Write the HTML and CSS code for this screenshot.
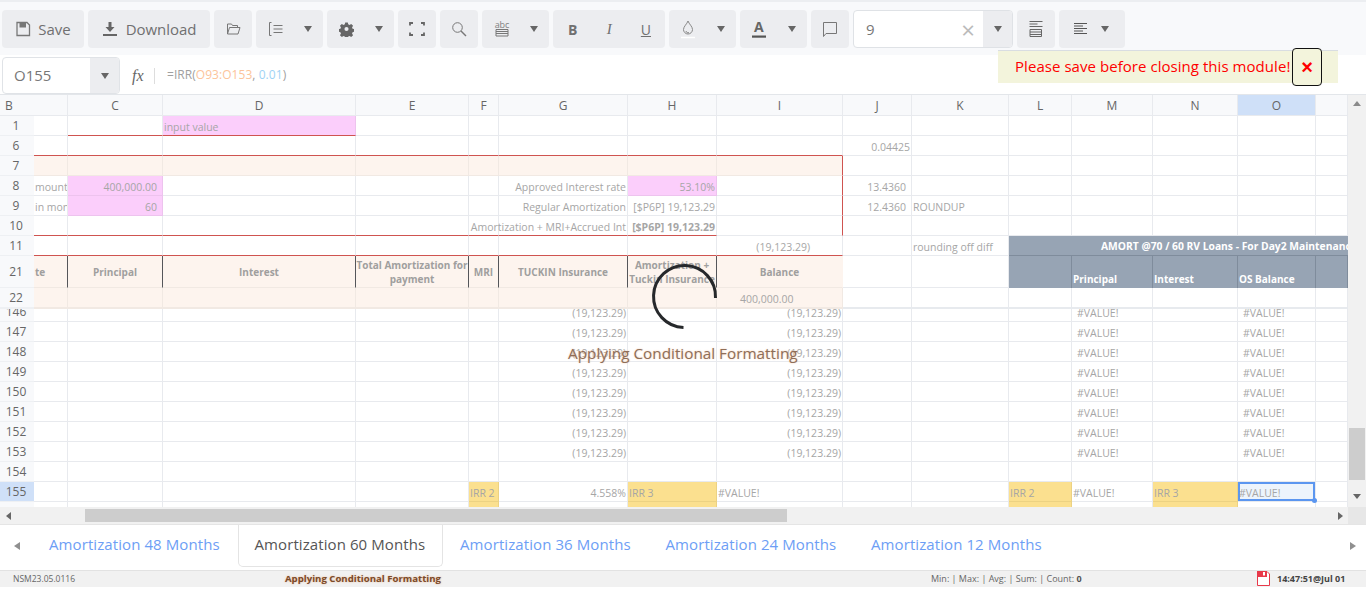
FILE: index.html
```html
<!doctype html>
<html>
  <head>
    <title>Amortization</title>
    <link rel="stylesheet" href="styles.css">
  </head>
  <body>
    <div id="toolbar">
      <div class="btn wide-save"><svg width="16" height="16" viewBox="0 0 16 16"><path d="M2 1.5h10l2.5 2.5v10.5h-12.5z" fill="none" stroke="#777" stroke-width="1.3"/><rect x="4.5" y="2" width="6.5" height="4.5" fill="#777"/></svg><span>Save</span></div>
      <div class="btn wide-dl"><svg width="16" height="16" viewBox="0 0 16 16"><path d="M6.5 1h3v5h3l-4.500 5-4.500-5h3zM1 13h14v2h-14z" fill="#666"/></svg><span>Download</span></div>
      <div class="btn sq"><svg width="15" height="14" viewBox="0 0 15 14"><path d="M1.5 12v-10h4l1 1.500h5v2M1.500 12l2-6.500h10.500l-2 6.500z" fill="none" stroke="#777" stroke-width="1"/></svg></div>
      <div class="btn split"><svg width="16" height="16" viewBox="0 0 16 16"><path d="M3.5 1.5h-2v13h2M5.500 4.500h9M5.500 8h9M5.500 11.500h9" fill="none" stroke="#777" stroke-width="1"/></svg><i class="caret"></i></div>
      <div class="btn split"><svg width="15" height="15" viewBox="0 0 16 16"><path d="M6.6 1h2.800l.4 2 1.400.6 1.800-1.100 2 2-1.100 1.800.6 1.400 2 .4v2.800l-2 .4-.6 1.400 1.100 1.800-2 2-1.800-1.100-1.400.6-.4 2h-2.800l-.4-2-1.400-.6-1.800 1.100-2-2 1.100-1.800-.6-1.400-2-.4v-2.800l2-.4.6-1.400-1.100-1.800 2-2 1.800 1.100 1.400-.6zM8 5.800a2.200 2.200 0 1 0 0 4.400 2.200 2.200 0 0 0 0-4.400z" fill="#666" transform="translate(0 -.5)"/></svg><i class="caret"></i></div>
      <div class="btn sq"><svg width="16" height="14" viewBox="0 0 16 14"><path d="M1 3.500v-2.500h3M12 1h3v2.500M15 10.500v2.500h-3M4 13h-3v-2.500" fill="none" stroke="#666" stroke-width="1.800"/></svg></div>
      <div class="btn sq"><svg width="16" height="16" viewBox="0 0 16 16"><circle cx="6.5" cy="6.5" r="4.800" fill="none" stroke="#777" stroke-width="1"/><path d="M10 10l5 5" stroke="#777" stroke-width="1.400"/></svg></div>
      <div class="btn split"><svg width="16" height="18" viewBox="0 0 16 18"><text x="8" y="7.500" text-anchor="middle" font-size="9" fill="#808080">abc</text><path d="M2 9.500h12v6.500h-12zM2 11.500h12M2 13.500h12" fill="none" stroke="#777" stroke-width="1"/></svg><i class="caret"></i></div>
      <div class="btn fmt"><b>B</b><em>I</em><u>U</u></div>
      <div class="btn split"><svg width="14" height="20" viewBox="0 0 14 20"><path d="M7 2c-1 3-4.500 5.500-4.500 8.500a4.500 4.500 0 0 0 9 0c0-3-3.500-5.500-4.500-8.500zM8 13.500a2 2 0 0 1-3-1.500" fill="none" stroke="#888" stroke-width="1"/><path d="M0 18.500h14" stroke="#fff" stroke-width="1.500"/></svg><i class="caret"></i></div>
      <div class="btn split"><svg width="14" height="20" viewBox="0 0 14 20"><path d="M0 16.500h14v2.200h-14z" fill="#555"/></svg><span class="a-glyph">A</span><i class="caret"></i></div>
      <div class="btn sq"><svg width="16" height="17" viewBox="0 0 16 17"><path d="M1.500 1.500h13v11h-10.500l-2.500 3z" fill="none" stroke="#777" stroke-width="1"/></svg></div>
      <div class="font-size"><span class="fs-val">9</span><span class="fs-x">&#215;</span><span class="fs-drop"><i class="caret"></i></span></div>
      <div class="btn sq"><svg width="16" height="18" viewBox="0 0 16 18"><path d="M1.500 1.500h13M1.500 4h8M1.500 6.500h13M2 9.500h11.500v7h-11.500zM2 12h11.500M2 14.500h11.500" fill="none" stroke="#666" stroke-width="1"/></svg></div>
      <div class="btn split align"><svg width="15" height="14" viewBox="0 0 15 14"><path d="M1 1.500h13M1 4h9M1 6.500h13M1 9h9M1 11.500h13" fill="none" stroke="#555" stroke-width="1"/></svg><i class="caret"></i></div>
    </div>

    <div id="formulaBar">
      <div class="namebox"><span class="nb-val">O155</span><span class="nb-drop"><i class="caret"></i></span></div>
      <span class="fx">fx</span>
      <span class="fx-sep"></span>
      <span class="formula">=IRR(<span class="f-range">O93:O153</span>, <span class="f-num">0.01</span>)</span>
    </div>

    <div id="sheetArea">
      <div id="grid">
        <table class="sheet">
          <colgroup>
            <col class="c-rh"><col class="c-b"><col class="c-c"><col class="c-d"><col class="c-e"><col class="c-f"><col class="c-g"><col class="c-h"><col class="c-i"><col class="c-j"><col class="c-k"><col class="c-l"><col class="c-m"><col class="c-n"><col class="c-o"><col class="c-p">
          </colgroup>
          <tr class="r-head">
            <th colspan="2" class="th-b">B</th><th>C</th><th>D</th><th>E</th><th>F</th><th>G</th><th>H</th><th>I</th><th>J</th><th>K</th><th>L</th><th>M</th><th>N</th><th class="sel-h">O</th><th></th>
          </tr>
          <tr><td class="rh">1</td><td></td><td class="red-b"></td><td class="pink red-b">input value</td><td></td><td></td><td></td><td></td><td></td><td></td><td></td><td></td><td></td><td></td><td></td><td></td></tr>
          <tr><td class="rh">6</td><td class="red-b"></td><td class="red-b"></td><td class="red-b"></td><td class="red-b"></td><td class="red-b"></td><td class="red-b"></td><td class="red-b"></td><td class="red-b"></td><td class="rt">0.04425</td><td></td><td></td><td></td><td></td><td></td><td></td></tr>
          <tr><td class="rh">7</td><td class="peach"></td><td class="peach"></td><td class="peach"></td><td class="peach"></td><td class="peach"></td><td class="peach"></td><td class="peach"></td><td class="peach red-r"></td><td></td><td></td><td></td><td></td><td></td><td></td><td></td></tr>
          <tr><td class="rh">8</td><td>mount</td><td class="pink rt pad">400,000.00</td><td></td><td></td><td></td><td class="rt">Approved Interest rate</td><td class="pink rt">53.10%</td><td class="red-r"></td><td class="rt pad">13.4360</td><td></td><td></td><td></td><td></td><td></td><td></td></tr>
          <tr><td class="rh">9</td><td>in mon</td><td class="pink rt pad">60</td><td></td><td></td><td></td><td class="rt">Regular Amortization</td><td class="rt">[$P6P] 19,123.29</td><td class="red-r"></td><td class="rt pad">12.4360</td><td>ROUNDUP</td><td></td><td></td><td></td><td></td><td></td></tr>
          <tr><td class="rh">10</td><td class="red-b"></td><td class="red-b"></td><td class="red-b"></td><td class="red-b"></td><td class="red-b"></td><td class="open rt red-b"><span class="over-left">Amortization + MRI+Accrued Int</span></td><td class="rt strong red-b">[$P6P] 19,123.29</td><td class="red-r"></td><td></td><td></td><td></td><td></td><td></td><td></td><td></td></tr>
          <tr><td class="rh">11</td><td class="red-b"></td><td class="red-b"></td><td class="red-b"></td><td class="red-b"></td><td class="red-b"></td><td class="red-b"></td><td class="red-b"></td><td class="rt red-b neg">(19,123.29)</td><td></td><td>rounding off diff</td><td colspan="5" class="amort-title">AMORT @70 / 60 RV Loans - For Day2 Maintenance</td></tr>
          <tr class="r-21"><td class="rh">21</td><td class="hd hd-left">te</td><td class="hd">Principal</td><td class="hd">Interest</td><td class="hd tight">Total Amortization for payment</td><td class="hd">MRI</td><td class="hd">TUCKIN Insurance</td><td class="hd tight">Amortization + Tuckin Insurance</td><td class="hd hd-last">Balance</td><td></td><td></td><td class="am"></td><td class="am">Principal</td><td class="am">Interest</td><td class="am">OS Balance</td><td class="am"></td></tr>
          <tr class="r-22"><td class="rh">22</td><td class="peach"></td><td class="peach"></td><td class="peach"></td><td class="peach"></td><td class="peach"></td><td class="peach"></td><td class="peach"></td><td class="peach bal">400,000.00</td><td></td><td></td><td></td><td></td><td></td><td></td><td></td></tr>
        </table>

        <div class="scrolled">
          <table class="sheet">
            <colgroup>
              <col class="c-rh"><col class="c-b"><col class="c-c"><col class="c-d"><col class="c-e"><col class="c-f"><col class="c-g"><col class="c-h"><col class="c-i"><col class="c-j"><col class="c-k"><col class="c-l"><col class="c-m"><col class="c-n"><col class="c-o"><col class="c-p">
            </colgroup>
            <tr><td class="rh">146</td><td></td><td></td><td></td><td></td><td></td><td class="rt">(19,123.29)</td><td></td><td class="rt">(19,123.29)</td><td></td><td></td><td></td><td class="val">#VALUE!</td><td></td><td class="val">#VALUE!</td><td></td></tr>
            <tr><td class="rh">147</td><td></td><td></td><td></td><td></td><td></td><td class="rt">(19,123.29)</td><td></td><td class="rt">(19,123.29)</td><td></td><td></td><td></td><td class="val">#VALUE!</td><td></td><td class="val">#VALUE!</td><td></td></tr>
            <tr><td class="rh">148</td><td></td><td></td><td></td><td></td><td></td><td class="rt">(19,123.29)</td><td></td><td class="rt">(19,123.29)</td><td></td><td></td><td></td><td class="val">#VALUE!</td><td></td><td class="val">#VALUE!</td><td></td></tr>
            <tr><td class="rh">149</td><td></td><td></td><td></td><td></td><td></td><td class="rt">(19,123.29)</td><td></td><td class="rt">(19,123.29)</td><td></td><td></td><td></td><td class="val">#VALUE!</td><td></td><td class="val">#VALUE!</td><td></td></tr>
            <tr><td class="rh">150</td><td></td><td></td><td></td><td></td><td></td><td class="rt">(19,123.29)</td><td></td><td class="rt">(19,123.29)</td><td></td><td></td><td></td><td class="val">#VALUE!</td><td></td><td class="val">#VALUE!</td><td></td></tr>
            <tr><td class="rh">151</td><td></td><td></td><td></td><td></td><td></td><td class="rt">(19,123.29)</td><td></td><td class="rt">(19,123.29)</td><td></td><td></td><td></td><td class="val">#VALUE!</td><td></td><td class="val">#VALUE!</td><td></td></tr>
            <tr><td class="rh">152</td><td></td><td></td><td></td><td></td><td></td><td class="rt">(19,123.29)</td><td></td><td class="rt">(19,123.29)</td><td></td><td></td><td></td><td class="val">#VALUE!</td><td></td><td class="val">#VALUE!</td><td></td></tr>
            <tr><td class="rh">153</td><td></td><td></td><td></td><td></td><td></td><td class="rt">(19,123.29)</td><td></td><td class="rt">(19,123.29)</td><td></td><td></td><td></td><td class="val">#VALUE!</td><td></td><td class="val">#VALUE!</td><td></td></tr>
            <tr><td class="rh">154</td><td></td><td></td><td></td><td></td><td></td><td></td><td></td><td></td><td></td><td></td><td></td><td></td><td></td><td></td><td></td></tr>
            <tr><td class="rh sel-h">155</td><td></td><td></td><td></td><td></td><td class="yellow">IRR 2</td><td class="rt">4.558%</td><td class="yellow">IRR 3</td><td>#VALUE!</td><td></td><td></td><td class="yellow">IRR 2</td><td>#VALUE!</td><td class="yellow">IRR 3</td><td class="sel-cell">#VALUE!<i class="handle"></i></td><td></td></tr>
            <tr><td class="rh"></td><td></td><td></td><td></td><td></td><td class="yellow"></td><td></td><td class="yellow"></td><td></td><td></td><td></td><td class="yellow"></td><td></td><td class="yellow"></td><td></td><td></td></tr>
          </table>
        </div>
      </div>

      <div class="vscroll">
        <i class="arr-up"></i>
        <div class="v-track"><div class="v-thumb"></div></div>
        <i class="arr-down"></i>
      </div>
    </div>

    <div class="hscroll">
      <i class="arr-left"></i>
      <div class="h-track"><div class="h-thumb"></div></div>
      <i class="arr-right"></i>
      <div class="h-corner"></div>
    </div>

    <div id="tabs">
      <i class="tab-prev"></i>
      <a class="tab">Amortization 48 Months</a>
      <a class="tab active">Amortization 60 Months</a>
      <a class="tab">Amortization 36 Months</a>
      <a class="tab">Amortization 24 Months</a>
      <a class="tab">Amortization 12 Months</a>
      <i class="tab-next"></i>
    </div>

    <div id="status">
      <span class="st-id">NSM23.05.0116</span>
      <span class="st-msg">Applying Conditional Formatting</span>
      <span class="st-calc">Min: | Max: | Avg: | Sum: | Count: <b>0</b></span>
      <svg class="st-save" width="13" height="15" viewBox="0 0 13 15"><path d="M.5.5h9.500l2.500 2.500v11.500h-12z" fill="#fff" stroke="#e8394a"/><path d="M0 0h10v6h-10z" fill="#e8394a"/><rect x="6" y="1" width="2" height="3.5" fill="#fff"/></svg>
      <span class="st-time">14:47:51@Jul 01</span>
    </div>

    <!-- overlays -->
    <div id="toast">
      <span>Please save before closing this module!</span>
      <button class="toast-close">&#215;</button>
    </div>
    <svg id="spinner" width="70" height="70" viewBox="0 0 70 70"><path d="M65.5 37a31 31 0 1 0-32 29.500" fill="none" stroke="#26282b" stroke-width="3"/></svg>
    <div id="loadingText">Applying Conditional Formatting</div>
  </body>
</html>
```

FILE: styles.css
```css
* {
  box-sizing: border-box;
}
html, body {
  height: 100%;
}
body {
  margin: 0;
  background-color: #fff;
  font-family: "Open Sans", "Liberation Sans", sans-serif;
  color: #666;
  overflow: hidden;
  position: relative;
}

/* toolbar */
#toolbar {
  height: 55px;
  padding: 8px 2px 7px 2px;
  border-top: 2px solid #eceef1;
  background-color: #f8f9fb;
  display: flex;
  gap: 4px;
}
.btn {
  height: 38px;
  background-color: #ecedf0;
  border-radius: 4px;
  display: flex;
  align-items: center;
  justify-content: center;
  color: #707070;
  font-size: 15px;
  letter-spacing: -0.05px;
  flex: none;
}
.wide-save {
  width: 82px;
  gap: 7px;
}
.wide-dl {
  width: 122px;
  gap: 8px;
}
.sq {
  width: 38px;
}
.split {
  width: 67px;
  justify-content: space-between;
  padding: 0 11px 0 12px;
  position: relative;
}
.align {
  width: 66px;
  padding: 0 16px 0 14px;
}
.caret {
  display: inline-block;
  width: 0;
  height: 0;
  border-left: 4px solid transparent;
  border-right: 4px solid transparent;
  border-top: 6px solid #666;
}
.fmt {
  width: 112px;
  justify-content: space-between;
  padding: 0 14px 0 15px;
  font-size: 14px;
}
.fmt em {
  font-family: "Liberation Serif", serif;
  font-size: 15px;
}
.a-glyph {
  position: absolute;
  left: 14px;
  top: 7px;
  font-size: 14px;
  font-weight: bold;
  color: #666;
}
.font-size {
  width: 160px;
  height: 38px;
  border: 1px solid #dfe2e6;
  border-radius: 4px;
  background-color: #fff;
  display: flex;
  align-items: center;
  overflow: hidden;
  flex: none;
}
.fs-val {
  flex: 1;
  padding-left: 12px;
  font-size: 15px;
  color: #777;
}
.fs-x {
  width: 30px;
  text-align: center;
  font-size: 24px;
  color: #bbb;
}
.fs-drop {
  width: 29px;
  height: 100%;
  background-color: #ecedf0;
  display: flex;
  align-items: center;
  justify-content: center;
}

/* formula bar */
#formulaBar {
  height: 40px;
  padding: 2px 0 0 2px;
  border-bottom: 1px solid #e3e6ea;
  display: flex;
  align-items: center;
  background-color: #fff;
}
.namebox {
  width: 118px;
  height: 37px;
  border: 1px solid #e0e3e7;
  border-radius: 4px;
  display: flex;
  overflow: hidden;
}
.nb-val {
  flex: 1;
  padding: 7px 0 0 11px;
  font-size: 15px;
  color: #777;
}
.nb-drop {
  width: 29px;
  background-color: #ecedf0;
  display: flex;
  align-items: center;
  justify-content: center;
}
.fx {
  margin-left: 12px;
  width: 22px;
  font-family: "Liberation Serif", serif;
  font-style: italic;
  font-size: 16px;
  color: #666;
}
.fx-sep {
  width: 1px;
  height: 16px;
  background-color: #ddd;
}
.formula {
  margin: 0 0 2px 12px;
  font-size: 12px;
  letter-spacing: 0.05px;
  color: #a0a0a0;
}
.f-range {
  color: #fcc49a;
}
.f-num {
  color: #9fd3f5;
}

/* sheet */
#sheetArea {
  display: flex;
  height: 412px;
}
#grid {
  width: 1348px;
  flex: none;
  overflow: hidden;
}
.sheet {
  table-layout: fixed;
  border-collapse: separate;
  border-spacing: 0;
  width: 1348px;
  font-size: 10.5px;
  color: #a6a6a6;
}
.c-rh { width: 34px; }
.c-b { width: 34px; }
.c-c { width: 95px; }
.c-d { width: 193px; }
.c-e { width: 113px; }
.c-f { width: 30px; }
.c-g { width: 129px; }
.c-h { width: 89px; }
.c-i { width: 126px; }
.c-j { width: 69px; }
.c-k { width: 97px; }
.c-l { width: 63px; }
.c-m { width: 81px; }
.c-n { width: 85px; }
.c-o { width: 78px; }
.c-p { width: 32px; }

.sheet th, .sheet td {
  padding: 3px 1px 0 1px;
  height: 20px;
  border-right: 1px solid #e8eaee;
  border-bottom: 1px solid #e8eaee;
  white-space: nowrap;
  overflow: hidden;
  font-weight: normal;
  vertical-align: middle;
  line-height: 16px;
}
.sheet th {
  background-color: #f8f9fb;
  font-size: 12px;
  color: #666;
  text-align: center;
  padding: 0 1px;
  line-height: 19px;
}
.r-head th {
  height: 21px;
}
.sheet th.th-b {
  text-align: left;
  padding-left: 5px;
}
.sheet td.rh {
  background-color: #f8f9fb;
  border-right: 0;
  border-bottom-color: #eef0f3;
  font-size: 12px;
  color: #666;
  text-align: center;
  padding: 0 3px 0 1px;
  line-height: 19px;
}
.sheet .sel-h {
  background-color: #cfe0f8;
}
.sheet td.rh.sel-h {
  background-color: #cfe0f8;
}
.sheet td.rt {
  text-align: right;
}
.sheet td.pad {
  padding-right: 5px;
}
.sheet td.strong {
  font-weight: bold;
}
.sheet td.open {
  overflow: visible;
}
.over-left {
  display: flex;
  justify-content: flex-end;
}
.sheet td.pink {
  background-color: #fbcefb;
  border-right-color: #edc3ee;
  border-bottom-color: #edc3ee;
}
.sheet td.peach {
  background-color: #fdf4ee;
  border-right-color: #f1e9e3;
  border-bottom-color: #f1e9e3;
}
.sheet td.yellow {
  background-color: #fbe08f;
  border-right-color: #ecd283;
  border-bottom-color: #ecd283;
}
.sheet td.red-b {
  border-bottom-color: #cf5350;
}
.sheet td.red-r {
  border-right-color: #cf5350;
}
.sheet td.neg {
  padding-right: 32px;
}

.r-21 td {
  height: 32px;
}
.sheet td.hd {
  background-color: #fdf4ee;
  border-right-color: #55565a;
  border-bottom-color: #f1e9e3;
  text-align: center;
  font-size: 10px;
  font-weight: bold;
  color: #a09f9e;
  white-space: normal;
  line-height: 14px;
  padding: 0 1px;
}
.sheet td.hd-left {
  text-align: left;
}
.sheet td.hd-last {
  border-right-color: #fdf4ee;
}
.sheet td.tight {
  padding: 0;
}
.r-22 td {
  height: 21px;
  border-bottom-width: 2px;
  border-bottom-color: #e7eaee;
}
.sheet td.bal {
  padding-left: 23px;
}

.sheet td.amort-title {
  background-color: #97a4b4;
  color: #fff;
  font-size: 10.3px;
  font-weight: bold;
  padding: 0 0 0 92px;
  border-right: 0;
  border-bottom-color: #7f8c9c;
}
.sheet td.am {
  background-color: #97a4b4;
  border-right-color: #7f8c9c;
  border-bottom: 0;
  color: #fff;
  font-size: 10px;
  font-weight: bold;
  vertical-align: bottom;
  line-height: 17px;
}

.scrolled {
  height: 198px;
  overflow: hidden;
}
.scrolled .sheet {
  margin-top: -7px;
}
.sheet td.val {
  padding-left: 5px;
}
.sheet td.sel-cell {
  position: relative;
  overflow: visible;
  background-color: #edf4fc;
  box-shadow: inset 0 0 0 2px #5b96f0;
}
.handle {
  position: absolute;
  right: -2px;
  bottom: -2px;
  width: 5px;
  height: 5px;
  border-radius: 50%;
  background-color: #5b96f0;
}

/* scrollbars */
.vscroll {
  width: 18px;
  background-color: #f1f1f1;
  display: flex;
  flex-direction: column;
  align-items: center;
}
.v-track {
  flex: 1;
  width: 100%;
  padding-top: 322px;
}
.v-thumb {
  margin: 0 auto;
  width: 16px;
  height: 52px;
  background-color: #cdcdcd;
}
.arr-up, .arr-down, .arr-left, .arr-right, .tab-prev, .tab-next {
  display: block;
  width: 0;
  height: 0;
  flex: none;
}
.arr-up {
  margin-top: 6px;
  border-left: 4px solid transparent;
  border-right: 4px solid transparent;
  border-bottom: 5px solid #8a8a8a;
}
.arr-down {
  margin-bottom: 8px;
  border-left: 4px solid transparent;
  border-right: 4px solid transparent;
  border-top: 5px solid #666;
}
.hscroll {
  height: 18px;
  background-color: #f1f1f1;
  border-bottom: 1px solid #e5e5e5;
  display: flex;
  align-items: center;
  padding-left: 6px;
}
.arr-left {
  border-top: 4px solid transparent;
  border-bottom: 4px solid transparent;
  border-right: 5px solid #666;
}
.arr-right {
  margin-right: 5px;
  border-top: 4px solid transparent;
  border-bottom: 4px solid transparent;
  border-left: 5px solid #666;
}
.h-track {
  flex: 1;
  padding: 0 551px 0 74px;
}
.h-thumb {
  height: 13px;
  background-color: #cdcdcd;
}
.h-corner {
  width: 18px;
  align-self: stretch;
  background-color: #e7e7e7;
}

/* tabs */
#tabs {
  height: 46px;
  background-color: #fff;
  border-bottom: 1px solid #e2e2e2;
  display: flex;
  align-items: flex-start;
  padding-left: 14px;
  position: relative;
}
.tab-prev {
  margin-top: 17px;
  border-top: 4px solid transparent;
  border-bottom: 4px solid transparent;
  border-right: 6px solid #8f8f8f;
}
.tab-next {
  position: absolute;
  right: 10px;
  top: 17px;
  border-top: 4px solid transparent;
  border-bottom: 4px solid transparent;
  border-left: 6px solid #8f8f8f;
}
.tab {
  height: 42px;
  padding: 9px 17px 0 17px;
  width: 205.5px;
  font-size: 15px;
  letter-spacing: 0.09px;
  color: #6d9ef5;
  white-space: nowrap;
}
.tab:first-of-type {
  margin-left: 12px;
}
.tab.active {
  color: #555;
  border: 1px solid #e4e4e4;
  border-top: 0;
  border-radius: 0 0 5px 5px;
  padding-left: 16px;
}

/* status bar */
#status {
  height: 16px;
  padding: 0 0 1px 13px;
  background-color: #f1f1f1;
  font-size: 9px;
  color: #666;
  display: flex;
  align-items: center;
}
.st-id {
  width: 272px;
  font-size: 8.5px;
}
.st-msg {
  width: 646px;
  font-size: 9.6px;
  font-weight: bold;
  color: #7a4a2a;
  text-shadow: 0 0 2px #e9b48e;
}
.st-calc {
  width: 326px;
}
.st-calc b {
  color: #555;
}
.st-save {
  margin-right: 7px;
}
.st-time {
  font-weight: bold;
  color: #444;
  white-space: nowrap;
}

/* things sitting over the page */
#toast {
  position: absolute;
  left: 998px;
  top: 50px;
  width: 340px;
  height: 33px;
  background-color: #f3f4dc;
  border-top: 1px solid #d9dde2;
  color: #f00;
  font-size: 15px;
  letter-spacing: 0.05px;
  padding: 5px 0 0 17px;
}
.toast-close {
  position: absolute;
  left: 294px;
  top: -3px;
  width: 30px;
  height: 38px;
  border: 1px solid #111;
  border-radius: 4px;
  background-color: #f3f4dc;
  color: #f00;
  font-size: 20px;
  font-weight: bold;
  padding: 0;
  line-height: 34px;
}
#spinner {
  position: absolute;
  left: 650px;
  top: 261px;
}
#loadingText {
  position: absolute;
  left: 568px;
  top: 343px;
  font-size: 15.3px;
  color: #8f6e58;
  text-shadow: 0 0 2px #f2c9ab;
  white-space: nowrap;
}
```
